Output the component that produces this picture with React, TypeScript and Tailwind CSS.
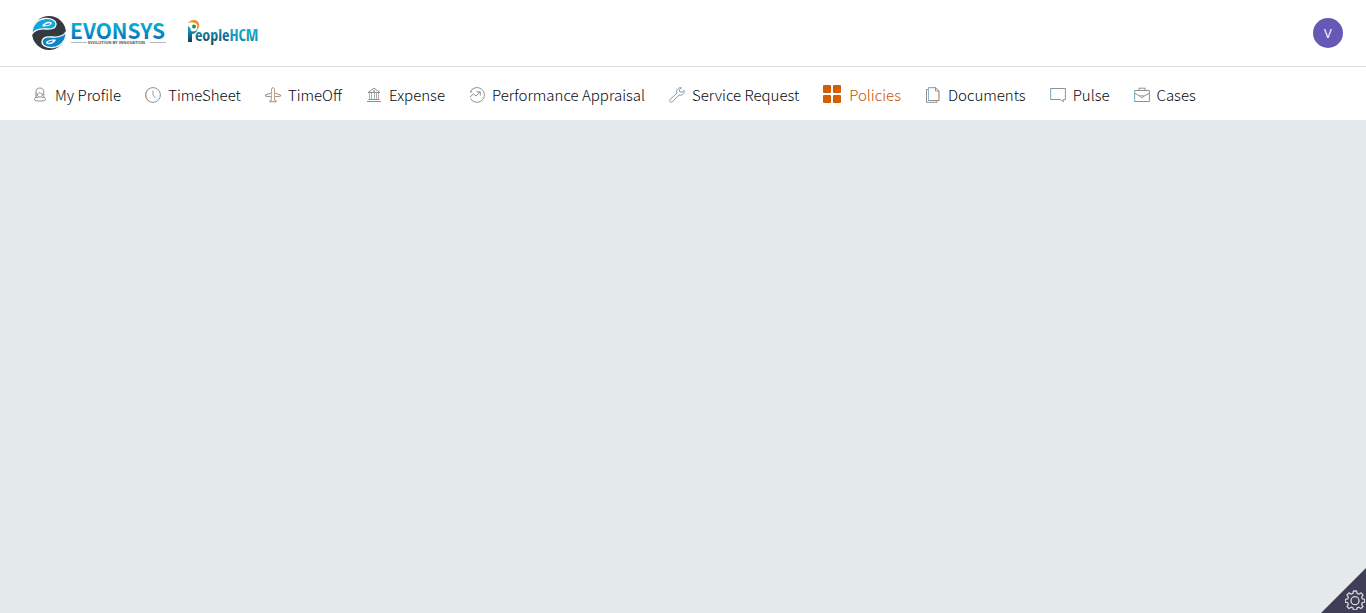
import type { ReactNode } from "react";

function Glyph({ children }: { children: ReactNode }) {
  return (
    <svg
      viewBox="0 0 16 16"
      className="h-4 w-4 shrink-0"
      fill="none"
      stroke="currentColor"
      strokeWidth="0.9"
      aria-hidden="true"
    >
      {children}
    </svg>
  );
}

const items: { label: string; active?: boolean; icon: ReactNode }[] = [
  {
    label: "My Profile",
    icon: (
      <Glyph>
        <path d="M4 10V5.200a3.900 4.200 0 0 1 7.800 0V10M4 10c-.9.5-1.600 1.500-1.600 2.600 0 1.900 11 1.900 11 0 0-1.100-.7-2.100-1.600-2.600" />
        <path d="M5.300 7c1.200 0 2-.7 2.300-1.700.5 1 1.500 1.500 2.900 1.700 0 1.800-1.200 3.100-2.600 3.100S5.300 8.800 5.300 7ZM4 10.500h2l.4-.8M11.800 10.500H10l-.6-.8" />
        <path d="M4 5v5" className="stroke-[#7fb3cc]" />
      </Glyph>
    ),
  },
  {
    label: "TimeSheet",
    icon: (
      <Glyph>
        <circle cx="8" cy="8" r="7.400" />
        <path d="M5 1.300a7.400 7.400 0 0 0 0 13.400" className="stroke-[#c4906f]" />
        <path d="M8 3.500V8l2.300 3" className="stroke-[#6fa3b8]" />
      </Glyph>
    ),
  },
  {
    label: "TimeOff",
    icon: (
      <Glyph>
        <path d="M6.500 6V2.500c0-2.300 3-2.300 3 0V6l6 2v1.200l-6 .6v3l1.700 1v1H4.800v-1l1.700-1v-3l-6-.6V8l6-2Z" />
        <path d="M9.500 2.500v11" className="stroke-[#dc9a62]" />
        <path d="M6.500 2.500v11" className="stroke-[#79bdd8]" />
      </Glyph>
    ),
  },
  {
    label: "Expense",
    icon: (
      <Glyph>
        <path d="M2 5.500 8 1.200l6 4.300ZM2.500 12.500h11M1 14.500h14" />
        <circle cx="8" cy="4" r=".6" />
        <path d="M3.500 6v6M8.500 6v6" className="stroke-[#79b6d1]" />
        <path d="M5.500 6v6M10.500 6v6M12.500 6v6" className="stroke-[#c49a85]" />
      </Glyph>
    ),
  },
  {
    label: "Performance Appraisal",
    icon: (
      <Glyph>
        <path d="M1.200 5A7.400 7.400 0 1 1 1.500 11.500M1.200 5h2" />
        <path d="m.8 10 3.700-3 2.500 2L11 5M7.500 4.800h3.800v3.700" />
      </Glyph>
    ),
  },
  {
    label: "Service Request",
    icon: (
      <Glyph>
        <path
          d="M12.500.9c-2-.8-4.800.7-4.800 3.300 0 .7.100 1.300.4 1.800l-6.900 6.300a1.650 1.650 0 0 0 2.400 2.400l6.500-6.700c2.900 1 5.500-1.200 5.200-4.500l-2.300 1.800-2.300-.6-.4-2.100Z"
          className="stroke-[#72919f]"
        />
        <path d="M2.500 13.500h.2" />
      </Glyph>
    ),
  },
  {
    label: "Policies",
    active: true,
    icon: (
      <svg viewBox="0 0 18 18" className="mb-0.5 h-4.5 w-4.5 shrink-0" fill="currentColor" aria-hidden="true">
        <rect width="8" height="8" rx="1" />
        <rect x="10" width="8" height="8" rx="1" />
        <rect y="10" width="8" height="8" rx="1" />
        <rect x="10" y="10" width="8" height="8" rx="1" />
      </svg>
    ),
  },
  {
    label: "Documents",
    icon: (
      <Glyph>
        <path d="M3.500.7h7.300L14 4v9.500H3.500Z" />
        <path d="M10.500.7V4H14M3.500 2.500h-2v12.800h10.500v-1.800" />
        <path d="M3.500 1v12.500" className="stroke-[#8ab4dc]" />
        <path d="M14 4v9.500" className="stroke-[#d9a578]" />
      </Glyph>
    ),
  },
  {
    label: "Pulse",
    icon: (
      <Glyph>
        <path d="M.6 1.500h14.800v11h-2v2.200l-3.200-2.200H.6Z" />
        <path d="M.6 1.500v11" className="stroke-[#7ebed8]" />
      </Glyph>
    ),
  },
  {
    label: "Cases",
    icon: (
      <Glyph>
        <path d="M.6 3.500h14.800v11H.6ZM5 3.300V1.200h6v2.100M.6 6.200l5.800 3.200M15.400 6.200 9.600 9.400M6.400 8.800h3.200c0 2.400-3.200 2.400-3.200 0Z" />
        <path d="M.6 4v10" className="stroke-[#83bdd4]" />
      </Glyph>
    ),
  },
];

function Leaf({ flipped = false }: { flipped?: boolean }) {
  return (
    <g transform={flipped ? "rotate(180 18 18)" : undefined}>
      <path
        d="M1 19C.5 10 7 4 14 3.500c7-.5 11.500 2.500 11 6-.5 4-5 5-10 4.500C9 13.500 4 14.500 1 19Z"
        fill={flipped ? "#0d86c4" : "#14a5d8"}
        stroke="#fff"
        strokeWidth="1.300"
      />
      <path d="M11 11.300C12.500 8 16 6.300 20 7c3 1.800-2 5-9 4.300Z" fill="#fff" />
      <path d="M13.500 10.300c1.300-1.500 3.500-2.200 5.500-1.900.8 1-2 2.200-5.500 1.900Z" fill={flipped ? "#0d86c4" : "#14a5d8"} />
    </g>
  );
}

function EvonsysLogo() {
  return (
    <svg viewBox="1 0 136 36" className="h-9 w-34" role="img" aria-label="Evonsys, evolution by innovation">
      <defs>
        <linearGradient id="evonBlue" x1="0" y1="0" x2="0" y2="1">
          <stop offset="0.25" stopColor="#08b5dc" />
          <stop offset="0.8" stopColor="#0872b8" />
        </linearGradient>
      </defs>
      <circle cx="18" cy="18" r="17" fill="#343a40" />
      <Leaf />
      <Leaf flipped />
      <text
        x="39"
        y="24"
        fontSize="21"
        fontWeight="700"
        fill="url(#evonBlue)"
        className="font-['Noto_Sans_CJK_SC',sans-serif]"
      >
        EVONSYS
      </text>
      <path d="M40 27.500h16M119 27.500h16" stroke="#999" strokeWidth=".7" />
      <text x="57" y="29" fontSize="4" fontWeight="700" fill="#555" className="font-['Open_Sans',sans-serif]">
        EVOLUTION BY INNOVATION
      </text>
    </svg>
  );
}

function PeopleLogo() {
  return (
    <svg viewBox="1 0 72 30" className="h-7.5 w-18" role="img" aria-label="PeopleHCM">
      <defs>
        <linearGradient id="peopleBlue" x1="0" y1="0" x2="0" y2="1">
          <stop offset=".2" stopColor="#159bc4" />
          <stop offset="1" stopColor="#113c58" />
        </linearGradient>
        <linearGradient id="hcmBlue" x1="0" y1="0" x2="0" y2="1">
          <stop offset=".2" stopColor="#1aaed4" />
          <stop offset="1" stopColor="#0b7fa8" />
        </linearGradient>
      </defs>
      <path d="M1 8c2 1 3 3 3 5 3 1 5 0 7-2-1 3-4 5-6 5v8H1Z" fill="url(#peopleBlue)" />
      <path d="M1 5c3-4 10-4 11 1 1 3-1 5-3 6 2-3 2-6-1-7-2-1-4-1-7 0Z" fill="#f28c28" />
      <circle cx="7" cy="8.500" r="2" fill="#259447" />
      <text
        y="23"
        fontSize="16"
        fontWeight="700"
        className="font-['Open_Sans_Condensed','Roboto_Condensed','Liberation_Sans_Narrow',sans-serif]"
      >
        <tspan x="8" fill="url(#peopleBlue)">eople</tspan>
        <tspan fill="url(#hcmBlue)">HCM</tspan>
      </text>
    </svg>
  );
}

export default function App() {
  return (
    <div className="flex min-h-screen flex-col bg-[#e4e9ec] font-['Noto_Sans_CJK_SC',sans-serif]">
      <header className="flex items-center justify-between border-b border-[#dedede] bg-white py-4 pr-[23px] pl-8">
        <div className="flex h-8.5 items-center gap-5">
          <EvonsysLogo />
          <PeopleLogo />
        </div>
        <button
          type="button"
          aria-label="Account"
          className="flex h-7.5 w-7.5 items-center justify-center rounded-full bg-[#6559b5] font-['Open_Sans',sans-serif] text-[13px] leading-5 text-white"
        >
          V
        </button>
      </header>
      <nav className="bg-white px-8 pt-[15px] pb-[13px]">
        <ul className="flex items-center gap-6">
          {items.map((item) => (
            <li key={item.label}>
              <a
                href="#"
                aria-current={item.active ? "page" : undefined}
                className={
                  item.active
                    ? "flex items-center gap-2 text-[15px] leading-[25px] font-light whitespace-nowrap text-[#cc5200]"
                    : "flex items-center gap-[7px] text-[15px] leading-[25px] font-light whitespace-nowrap text-[#050a0e]"
                }
              >
                <span className={item.active ? "text-[#d35f00]" : "text-[#858585]"}>{item.icon}</span>
                {item.label}
              </a>
            </li>
          ))}
        </ul>
      </nav>
      <main className="flex-1" />
      <button
        type="button"
        aria-label="Settings"
        className="fixed right-0 bottom-0 h-[45px] w-[45px] bg-[#403e56] text-[#d7d7de] [clip-path:polygon(100%_0,100%_100%,0_100%)]"
      >
        <svg
          viewBox="0 0 20 20"
          className="absolute right-px bottom-[3px] h-5 w-5"
          fill="none"
          stroke="currentColor"
          strokeWidth="1.300"
          strokeLinejoin="round"
          aria-hidden="true"
        >
          <path d="M8.500 1h3l.6 2.500 1.700.7L16 2.900 18 5l-1.300 2.200.7 1.700 2.300.4v2.800l-2.400.5-.7 1.700L18 16.500l-2 2-2.200-1.300-1.700.7-.6 2h-3l-.6-2-1.700-.7L4 18.500l-2-2 1.300-2.200-.7-1.700-2.300-.5V9.300l2.400-.4.7-1.700L2 5l2-2.100 2.200 1.300 1.700-.7Z" />
          <circle cx="10" cy="10.700" r="4" />
        </svg>
      </button>
    </div>
  );
}
